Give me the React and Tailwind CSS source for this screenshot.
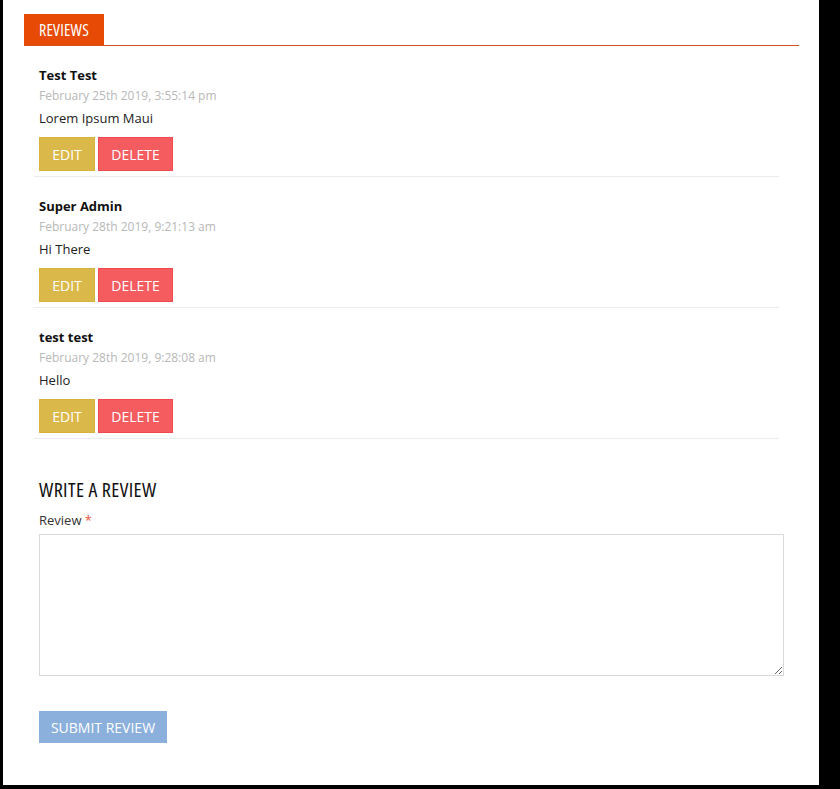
import React from "react";

const reviews = [
  { name: "Test Test", date: "February 25th 2019, 3:55:14 pm", text: "Lorem Ipsum Maui" },
  { name: "Super Admin", date: "February 28th 2019, 9:21:13 am", text: "Hi There" },
  { name: "test test", date: "February 28th 2019, 9:28:08 am", text: "Hello" },
];

const App = () => {
  return (
    <div className="w-[840px] h-[789px] bg-black font-['Open_Sans',sans-serif]">
      <div className="ml-[3px] w-[816px] h-[785px] bg-white pt-[14px] pl-[21px]">
        {/* Tab header */}
        <div className="w-[775px] border-b border-[#d4511c]">
          <div className="inline-flex items-center h-[31px] px-[15px] bg-[#e64a05] text-white text-[16px] [font-stretch:condensed] tracking-[0.2px] leading-none">
            REVIEWS
          </div>
        </div>

        {/* Review list */}
        <div className="ml-[10px] w-[745px]">
          {reviews.map((r) => (
            <div key={r.date} className="pt-[19px] pb-[5px] pl-[5px] border-b border-[#ececec]">
              <div className="text-[13px] leading-[20px] font-bold text-[#111]">{r.name}</div>
              <div className="mt-[1px] text-[12px] leading-[20px] text-[#b8b8b8]">{r.date}</div>
              <div className="mt-[2px] text-[13px] leading-[20px] text-[#222]">{r.text}</div>
              <div className="mt-[9px] flex gap-[3px]">
                <button className="h-[34px] w-[56px] bg-[#dbb84a] border border-[#d6b23a] text-white text-[14px]">
                  EDIT
                </button>
                <button className="h-[34px] w-[75px] bg-[#f45c5f] border border-[#ef4a4d] text-white text-[14px]">
                  DELETE
                </button>
              </div>
            </div>
          ))}
        </div>

        {/* Write a review */}
        <div className="ml-[15px] w-[745px] mt-[39px]">
          <h3 className="text-[20px] leading-[24px] text-[#111] [font-stretch:condensed] tracking-[0.4px]">
            WRITE A REVIEW
          </h3>
          <label className="block mt-[8px] text-[13px] leading-[20px] text-[#333]">
            Review <span className="text-[#e8543a]">*</span>
          </label>
          <textarea className="block mt-[4px] w-[745px] h-[142px] border border-[#d9d9d9] bg-white resize" />
          <button className="mt-[35px] h-[32px] w-[128px] bg-[#8cb0dc] text-white text-[14px]">
            SUBMIT REVIEW
          </button>
        </div>
      </div>
    </div>
  );
};

export default App;
